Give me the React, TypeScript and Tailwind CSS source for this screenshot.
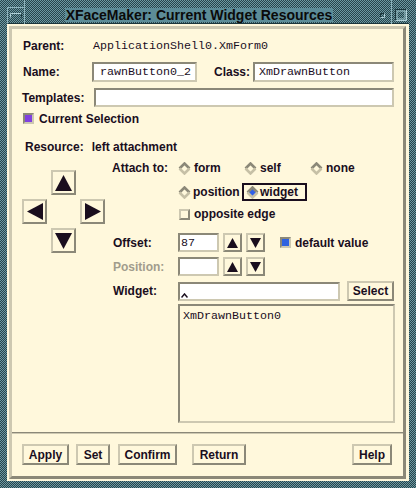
import React from "react";

const RAISED =
  "border-2 border-t-[#cdc8b1] border-l-[#cdc8b1] border-r-[#8b8878] border-b-[#8b8878]";
const INSET =
  "border-2 border-t-[#8b8878] border-l-[#8b8878] border-r-[#cdc8b1] border-b-[#cdc8b1]";
const LABEL = "text-[12px] font-bold leading-[14px] whitespace-nowrap";
const MONO =
  "font-['Liberation_Mono','Courier_New',monospace] text-[11.67px] leading-[14px] whitespace-nowrap";

type Dir = "up" | "down" | "left" | "right";

function Tri({ dir, w, h }: { dir: Dir; w: number; h: number }) {
  let pts = "";
  if (dir === "up") pts = `${w / 2},0 ${w},${h} 0,${h}`;
  if (dir === "down") pts = `0,0 ${w},0 ${w / 2},${h}`;
  if (dir === "left") pts = `0,${h / 2} ${w},0 ${w},${h}`;
  if (dir === "right") pts = `0,0 ${w},${h / 2} 0,${h}`;
  return (
    <svg width={w} height={h} viewBox={`0 0 ${w} ${h}`} className="block">
      <polygon points={pts} fill="#1a0e1e" />
    </svg>
  );
}

function BigArrow({ dir }: { dir: Dir }) {
  const vertical = dir === "up" || dir === "down";
  return (
    <div className={`${RAISED} w-[25px] h-[25px] bg-[#fff8dc] flex items-center justify-center`}>
      <Tri dir={dir} w={vertical ? 17 : 16} h={vertical ? 16 : 17} />
    </div>
  );
}

function SmallArrow({ dir }: { dir: Dir }) {
  return (
    <div className={`${RAISED} w-[19px] h-[19px] bg-[#fff8dc] flex items-center justify-center`}>
      <Tri dir={dir} w={11} h={10} />
    </div>
  );
}

function Diamond({ on }: { on?: boolean }) {
  return (
    <svg width="13" height="13" viewBox="0 0 13 13" className="block shrink-0">
      <polygon points="6.5,1.5 11.5,6.5 6.5,11.5 1.5,6.5" fill={on ? "#2f5fe8" : "#fff8dc"} />
      <polyline points="1.5,6.5 6.5,1.5 11.5,6.5" fill="none" stroke="#8b8878" strokeWidth="2.6" />
      <polyline points="1.5,6.5 6.5,11.5 11.5,6.5" fill="none" stroke="#c6c0a6" strokeWidth="2.6" />
    </svg>
  );
}

function Btn({ label, className }: { label: string; className: string }) {
  return (
    <div className={`${RAISED} bg-[#fff8dc] flex items-center justify-center ${className}`}>
      <span className={LABEL}>{label}</span>
    </div>
  );
}

function TitleBar() {
  return (
    <div className="flex h-[24px] shrink-0">
      <div className="w-[25px] border-r border-r-[#8cb2bb] pl-[7px] pt-[7px] flex">
        <div className="flex-1 border-t border-l border-t-[#8cb2bb] border-l-[#8cb2bb] border-b border-b-[#1b363c] flex items-center justify-center">
          <svg width="12" height="5" viewBox="0 0 12 5" className="block">
            <polyline points="0.5,4.5 0.5,0.5 11.5,0.5" fill="none" stroke="#b0d0d8" strokeWidth="1" />
            <polyline points="11.5,0.5 11.5,4.5" fill="none" stroke="#1b363c" strokeWidth="1" />
          </svg>
        </div>
      </div>
      <div className="flex-1 pt-[7px] flex">
        <div className="flex-1 border-b border-b-[#1b363c] flex justify-center items-start">
          <span className="mt-[1px] h-[14px] bg-[#5c8c98] leading-[14px] text-[14px] font-bold px-[1px] text-[#0a0a0a] whitespace-nowrap">
            XFaceMaker: Current Widget Resources
          </span>
        </div>
        <div className="w-[18px] border-b border-b-[#1b363c] flex items-center justify-center">
          <svg width="5" height="5" viewBox="0 0 5 5" className="block">
            <polyline points="0.5,4.5 0.5,0.5 4.5,0.5" fill="none" stroke="#1b363c" strokeWidth="1" />
            <polyline points="0.5,4.5 4.5,4.5 4.5,0.5" fill="none" stroke="#b0d0d8" strokeWidth="1" />
          </svg>
        </div>
      </div>
      <div className="w-[25px] border-l border-l-[#8cb2bb] pr-[7px] pt-[7px] flex">
        <div className="flex-1 border-b border-b-[#1b363c] flex items-center justify-center">
          <svg width="12" height="12" viewBox="0 0 12 12" className="block">
            <polyline points="0.5,11.5 0.5,0.5 11.5,0.5" fill="none" stroke="#1b363c" strokeWidth="1" />
            <polyline points="0.5,11.5 11.5,11.5 11.5,0.5" fill="none" stroke="#b0d0d8" strokeWidth="1" />
            <rect x="2" y="2" width="8" height="8" fill="none" stroke="#9cc2ca" strokeWidth="1" />
          </svg>
        </div>
      </div>
    </div>
  );
}

export default function App() {
  return (
    <div className="w-[416px] h-[488px] flex flex-col overflow-hidden bg-[repeating-conic-gradient(#27444b_0_25%,#6c98a2_0_50%)] bg-size-[2px_2px] font-['Liberation_Sans',Arial,sans-serif] text-[#1a0e1e]">
      <TitleBar />
      <div className="flex-1 flex px-[7px] pb-[7px] min-h-0">
        <div className="flex-1 flex bg-[#fff8dc] pt-[2px] pl-[2px] pr-[3px] pb-[2px]">
          <div className="flex-1 flex flex-col border-[3px] border-t-[#cdc8b1] border-l-[#cdc8b1] border-r-[#8b8878] border-b-[#8b8878]">
            <div className="flex-1 flex flex-col pl-[10px]">
              {/* Parent */}
              <div className="mt-[7px] h-[20px] flex items-center">
                <span className={`${LABEL} ml-[1px] w-[70px]`}>Parent:</span>
                <span className={MONO}>ApplicationShell0.XmForm0</span>
              </div>
              {/* Name / Class */}
              <div className="mt-[6px] h-[20px] flex items-center">
                <span className={`${LABEL} ml-[1px] w-[69px]`}>Name:</span>
                <div className={`${INSET} bg-white w-[105px] h-[20px] flex items-center pl-[6px] overflow-hidden`}>
                  <span className={MONO}>rawnButton0_2</span>
                </div>
                <span className={`${LABEL} ml-[17px] w-[39px]`}>Class:</span>
                <div className={`${INSET} bg-white w-[141px] h-[20px] flex items-center pl-[4px] overflow-hidden`}>
                  <span className={MONO}>XmDrawnButton</span>
                </div>
              </div>
              {/* Templates */}
              <div className="mt-[6px] h-[19px] flex items-center">
                <span className={`${LABEL} w-[72px]`}>Templates:</span>
                <div className={`${INSET} bg-white w-[300px] h-[19px]`} />
              </div>
              {/* Current Selection */}
              <div className="mt-[4px] h-[15px] flex items-center">
                <div className={`${INSET} ml-[1px] w-[11px] h-[11px] bg-[#8040e0]`} />
                <span className={`${LABEL} ml-[5px]`}>Current Selection</span>
              </div>
              {/* Resource */}
              <div className="mt-[14px] h-[14px] flex items-center">
                <span className={`${LABEL} ml-[3px]`}>Resource:</span>
                <span className={`${LABEL} ml-[8px]`}>left attachment</span>
              </div>
              {/* Lower section */}
              <div className="mt-[6px] flex">
                <div className="mt-[10px] grid grid-cols-[25px_25px_25px] grid-rows-[25px_25px_25px] gap-[4px] h-fit">
                  <div />
                  <BigArrow dir="up" />
                  <div />
                  <BigArrow dir="left" />
                  <div />
                  <BigArrow dir="right" />
                  <div />
                  <BigArrow dir="down" />
                  <div />
                </div>
                <div className="ml-[7px] flex flex-col">
                  {/* Attach row 1 */}
                  <div className="h-[16px] flex items-center">
                    <span className={`${LABEL} w-[66px]`}>Attach to:</span>
                    <div className="w-[66px] flex items-center gap-[3px]">
                      <Diamond />
                      <span className={LABEL}>form</span>
                    </div>
                    <div className="w-[66px] flex items-center gap-[3px]">
                      <Diamond />
                      <span className={LABEL}>self</span>
                    </div>
                    <div className="w-[66px] flex items-center gap-[3px]">
                      <Diamond />
                      <span className={LABEL}>none</span>
                    </div>
                  </div>
                  {/* Attach row 2 */}
                  <div className="mt-[7px] h-[18px] flex items-center">
                    <div className="ml-[66px] w-[64px] flex items-center gap-[2px]">
                      <Diamond />
                      <span className={LABEL}>position</span>
                    </div>
                    <div className="w-[65px] h-[18px] border-2 border-[#1a0e1e] flex items-center pl-[2px] gap-[1px]">
                      <Diamond on />
                      <span className={LABEL}>widget</span>
                    </div>
                  </div>
                  {/* opposite edge */}
                  <div className="mt-[6px] h-[14px] flex items-center">
                    <div className={`${RAISED} ml-[67px] w-[11px] h-[11px] bg-[#fff8dc]`} />
                    <span className={`${LABEL} ml-[4px]`}>opposite edge</span>
                  </div>
                  {/* Offset */}
                  <div className="mt-[12px] h-[19px] flex items-center">
                    <span className={`${LABEL} pl-[1px] w-[66px]`}>Offset:</span>
                    <div className={`${INSET} bg-white w-[41px] h-[19px] flex items-center pl-[1px]`}>
                      <span className={MONO}>87</span>
                    </div>
                    <div className="ml-[4px]">
                      <SmallArrow dir="up" />
                    </div>
                    <div className="ml-[4px]">
                      <SmallArrow dir="down" />
                    </div>
                    <div className={`${INSET} ml-[15px] w-[11px] h-[11px] bg-[#2f62e0]`} />
                    <span className={`${LABEL} ml-[4px]`}>default value</span>
                  </div>
                  {/* Position */}
                  <div className="mt-[5px] h-[19px] flex items-center">
                    <span className={`${LABEL} pl-[1px] w-[66px] text-[#a19c8c]`}>Position:</span>
                    <div className={`${INSET} bg-white w-[41px] h-[19px]`} />
                    <div className="ml-[4px]">
                      <SmallArrow dir="up" />
                    </div>
                    <div className="ml-[4px]">
                      <SmallArrow dir="down" />
                    </div>
                  </div>
                  {/* Widget */}
                  <div className="mt-[5px] h-[20px] flex items-center">
                    <span className={`${LABEL} pl-[1px] w-[66px]`}>Widget:</span>
                    <div className={`${INSET} bg-white w-[162px] h-[19px] flex items-end pl-[1px] pb-[1px]`}>
                      <svg width="7" height="5" viewBox="0 0 7 5" className="block">
                        <polyline points="0.5,4.5 3.5,1 6.5,4.5" fill="none" stroke="#1a0e1e" strokeWidth="1.5" />
                      </svg>
                    </div>
                    <Btn label="Select" className="ml-[7px] w-[47px] h-[20px]" />
                  </div>
                  {/* List */}
                  <div className={`${INSET} ml-[66px] mt-[3px] w-[217px] h-[119px] bg-[#fff8dc] pt-[3px] pl-[3px]`}>
                    <div className={MONO}>XmDrawnButton0</div>
                  </div>
                </div>
              </div>
            </div>
            {/* separator */}
            <div className="h-[2px] border-t border-t-[#8b8878] border-b border-b-[#cdc8b1]" />
            {/* buttons */}
            <div className="mt-[10px] mb-[11px] h-[21px] flex pl-[10px]">
              <Btn label="Apply" className="w-[47px] h-[21px]" />
              <Btn label="Set" className="ml-[7px] w-[34px] h-[21px]" />
              <Btn label="Confirm" className="ml-[8px] w-[59px] h-[21px]" />
              <Btn label="Return" className="ml-[15px] w-[54px] h-[21px]" />
              <Btn label="Help" className="ml-auto mr-[11px] w-[40px] h-[21px]" />
            </div>
          </div>
        </div>
      </div>
    </div>
  );
}
